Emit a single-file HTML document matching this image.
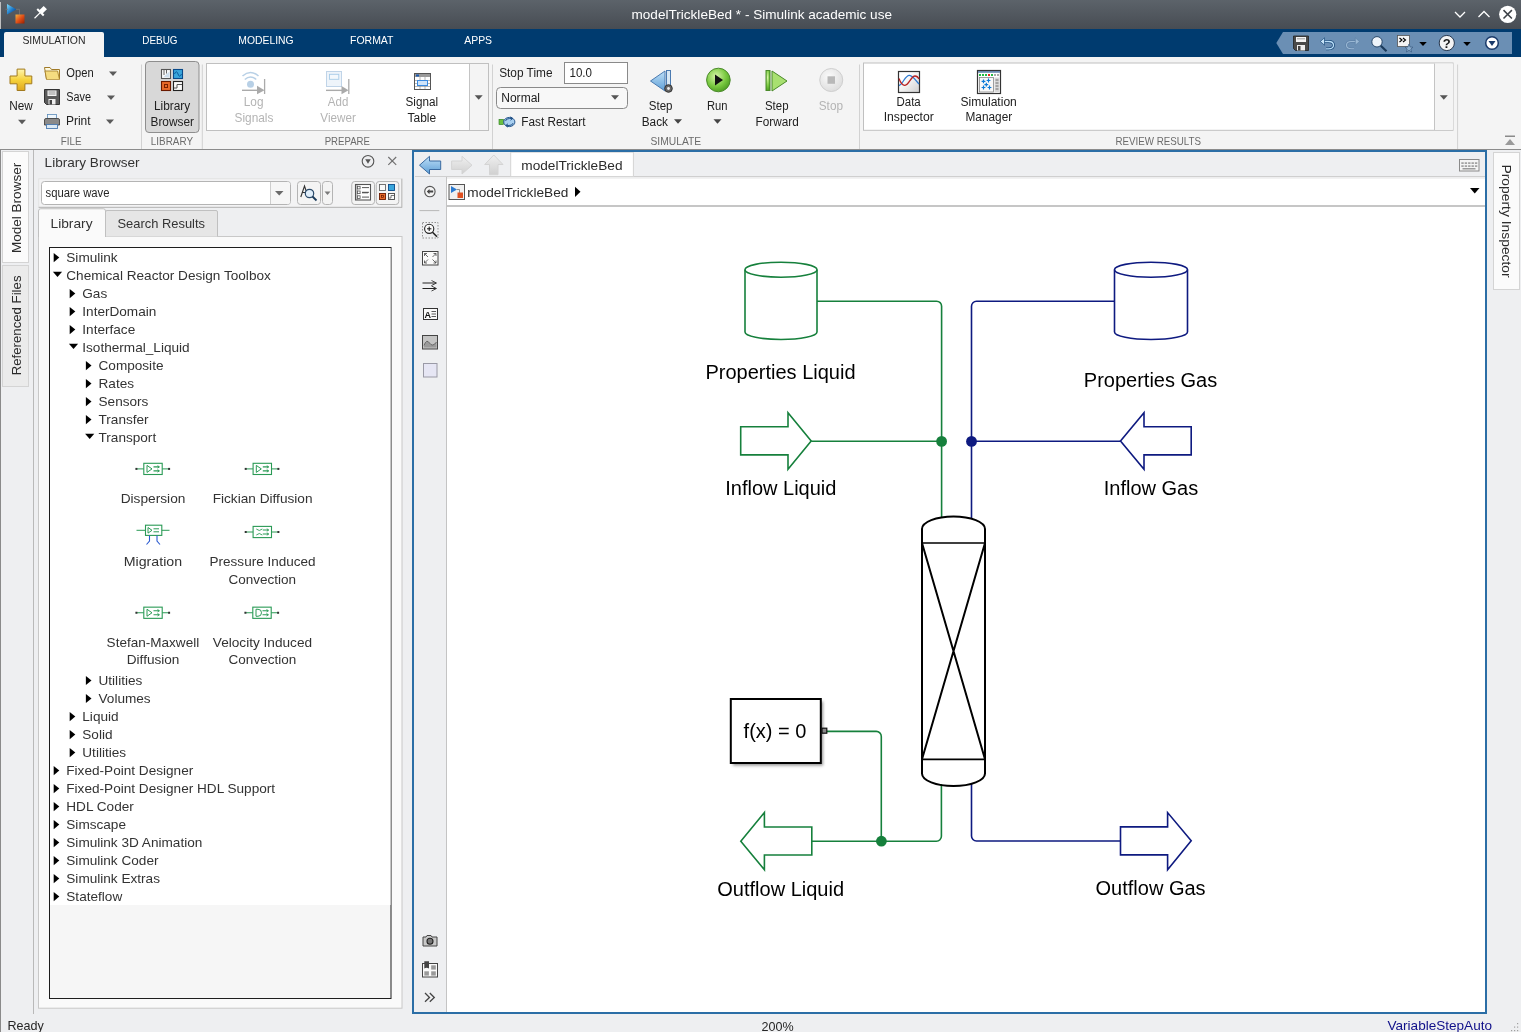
<!DOCTYPE html>
<html><head><meta charset="utf-8">
<style>
html,body{margin:0;padding:0;width:1521px;height:1032px;overflow:hidden;background:#eeeff1}
svg{display:block;font-family:"Liberation Sans",sans-serif;will-change:transform}
</style></head>
<body>
<svg width="1521" height="1032" viewBox="0 0 1521 1032">
<rect x="0" y="0" width="1521" height="1032" fill="#eeeff1" />
<defs><linearGradient id="tg" x1="0" y1="0" x2="0" y2="1"><stop offset="0" stop-color="#5c636a"/><stop offset="1" stop-color="#474c53"/></linearGradient><linearGradient id="gold" x1="0" y1="0" x2="0" y2="1"><stop offset="0" stop-color="#fff6b0"/><stop offset="0.5" stop-color="#f6d23c"/><stop offset="1" stop-color="#e0a820"/></linearGradient><linearGradient id="folder" x1="0" y1="0" x2="0" y2="1"><stop offset="0" stop-color="#fffef0"/><stop offset="1" stop-color="#f2d770"/></linearGradient><radialGradient id="run" cx="0.4" cy="0.35" r="0.7"><stop offset="0" stop-color="#d8f5a8"/><stop offset="0.6" stop-color="#79c940"/><stop offset="1" stop-color="#4a9a20"/></radialGradient><radialGradient id="stopg" cx="0.4" cy="0.35" r="0.7"><stop offset="0" stop-color="#fafafa"/><stop offset="1" stop-color="#dcdcdc"/></radialGradient><linearGradient id="blueArr" x1="0" y1="0" x2="0" y2="1"><stop offset="0" stop-color="#bfe0f8"/><stop offset="1" stop-color="#5e9fd6"/></linearGradient><linearGradient id="grayArr" x1="0" y1="0" x2="0" y2="1"><stop offset="0" stop-color="#f0f0f0"/><stop offset="1" stop-color="#d0d0d0"/></linearGradient><linearGradient id="slTri" x1="0" y1="0" x2="1" y2="1"><stop offset="0" stop-color="#80dcfa"/><stop offset="0.55" stop-color="#1a78c8"/><stop offset="1" stop-color="#0a2a70"/></linearGradient><linearGradient id="slSq" x1="0" y1="0" x2="1" y2="1"><stop offset="0" stop-color="#f0b040"/><stop offset="0.5" stop-color="#e05018"/><stop offset="1" stop-color="#982000"/></linearGradient><filter id="sh" x="-20%" y="-20%" width="140%" height="140%"><feGaussianBlur stdDeviation="1.5"/></filter></defs>
<rect x="0" y="0" width="1521" height="29" fill="url(#tg)" />
<line x1="0.5" y1="29" x2="0.5" y2="1032" stroke="#8a8a8a" stroke-width="1" />
<line x1="0.5" y1="2" x2="0.5" y2="29" stroke="#c0c0c0" stroke-width="1" />
<path d="M7,4 L16.5,9.5 L7,14.5 Z" fill="url(#slTri)" />
<path d="M5.5,9.3 H8 M16,9.3 H19.5 V15" fill="none" stroke="#777" stroke-width="0.8" />
<rect x="15.5" y="14.5" width="9" height="9" fill="url(#slSq)" />
<g transform="translate(40.2,12.6) rotate(45)" fill="#fff"><rect x="-2.3" y="-7.2" width="4.6" height="6.2"/><rect x="-4.6" y="-1.4" width="9.2" height="2"/><rect x="-0.6" y="0" width="1.2" height="8"/></g>
<text x="631.5" y="18.8" font-size="13.5" fill="#ffffff" textLength="260.5" lengthAdjust="spacingAndGlyphs" >modelTrickleBed * - Simulink academic use</text>
<path d="M1455,12 L1460,17 L1465,12" fill="none" stroke="#fff" stroke-width="1.3" />
<path d="M1478.5,17 L1484,11.5 L1489.5,17" fill="none" stroke="#fff" stroke-width="1.3" />
<circle cx="1507.7" cy="14.3" r="8.6" fill="#ffffff"/>
<path d="M1503.5,10.1 L1511.9,18.5 M1511.9,10.1 L1503.5,18.5" fill="none" stroke="#3d4248" stroke-width="1.5" />
<rect x="0" y="29" width="1521" height="28" fill="#003b6f" />
<path d="M4,57 V34 Q4,32 6,32 H102 Q104,32 104,34 V57 Z" fill="#f4f4f4" />
<text x="22.4" y="44.4" font-size="11.5" fill="#2a2a2a" textLength="63.1" lengthAdjust="spacingAndGlyphs" >SIMULATION</text>
<text x="142.3" y="44.4" font-size="11.5" fill="#ffffff" textLength="35.2" lengthAdjust="spacingAndGlyphs" >DEBUG</text>
<text x="238.3" y="44.4" font-size="11.5" fill="#ffffff" textLength="55.3" lengthAdjust="spacingAndGlyphs" >MODELING</text>
<text x="350" y="44.4" font-size="11.5" fill="#ffffff" textLength="43.5" lengthAdjust="spacingAndGlyphs" >FORMAT</text>
<text x="464.2" y="44.4" font-size="11.5" fill="#ffffff" textLength="27.9" lengthAdjust="spacingAndGlyphs" >APPS</text>
<path d="M1276.3,43 L1283,32 H1512 V54 H1283 Z" fill="#6b8fb4" />
<rect x="0" y="57" width="1521" height="92" fill="#f4f4f4" />
<rect x="0" y="149" width="1521" height="1" fill="#8c8c8c" />
<rect x="141.0" y="64.5" width="1" height="84.5" fill="#d2d2d2" />
<rect x="201.8" y="64.5" width="1" height="84.5" fill="#d2d2d2" />
<rect x="492.0" y="64.5" width="1" height="84.5" fill="#d2d2d2" />
<rect x="859.0" y="64.5" width="1" height="84.5" fill="#d2d2d2" />
<rect x="1457.1" y="64.5" width="1" height="84.5" fill="#d2d2d2" />
<text x="60.7" y="145" font-size="11" fill="#6b6b6b" textLength="20.8" lengthAdjust="spacingAndGlyphs" >FILE</text>
<text x="150.8" y="145" font-size="11" fill="#6b6b6b" textLength="42.2" lengthAdjust="spacingAndGlyphs" >LIBRARY</text>
<text x="324.7" y="144.7" font-size="11" fill="#6b6b6b" textLength="45.3" lengthAdjust="spacingAndGlyphs" >PREPARE</text>
<text x="650.5" y="144.5" font-size="11" fill="#6b6b6b" textLength="50.75" lengthAdjust="spacingAndGlyphs" >SIMULATE</text>
<text x="1115.4" y="144.5" font-size="11" fill="#6b6b6b" textLength="85.6" lengthAdjust="spacingAndGlyphs" >REVIEW RESULTS</text>
<path d="M17.1,69.1 H24.9 V76 H31.8 V83.8 H24.9 V90.5 H17.1 V83.8 H10 V76 H17.1 Z" fill="url(#gold)" stroke="#a27a1e" stroke-width="1" />
<text x="9.25" y="109.6" font-size="12" fill="#212121" textLength="23.6" lengthAdjust="spacingAndGlyphs" >New</text>
<path d="M18.0,119.75 L26.0,119.75 L22,124.25 Z" fill="#5a5a5a" />
<path d="M44.5,67.5 H50 L51.5,69.5 H59.5 V79.3 H46.5 Z" fill="url(#folder)" stroke="#a07a28" stroke-width="1" />
<path d="M46.5,79.3 L45,71 H57.5 L59.5,79.3" fill="#f5dc80" stroke="#a07a28" stroke-width="0.8" />
<text x="66.3" y="76.9" font-size="12" fill="#212121" textLength="27.3" lengthAdjust="spacingAndGlyphs" >Open</text>
<path d="M109.0,71.55 L117.0,71.55 L113,76.05 Z" fill="#5a5a5a" />
<path d="M44.5,89.5 H59.5 V104.5 H46.5 L44.5,102.5 Z" fill="#5a5a5a" stroke="#333" stroke-width="1" />
<rect x="47.5" y="90.5" width="9" height="5.5" fill="#f4f4f4" />
<line x1="48.5" y1="92" x2="55.5" y2="92" stroke="#777" stroke-width="0.8" />
<line x1="48.5" y1="94" x2="55.5" y2="94" stroke="#777" stroke-width="0.8" />
<rect x="48.5" y="99" width="7" height="5.5" fill="#f0f0f0" />
<rect x="49.5" y="100" width="2.5" height="4.5" fill="#444" />
<text x="66.3" y="100.8" font-size="12" fill="#212121" textLength="24.8" lengthAdjust="spacingAndGlyphs" >Save</text>
<path d="M107.0,95.55 L115.0,95.55 L111,100.05 Z" fill="#5a5a5a" />
<rect x="47.5" y="114.5" width="9" height="4" fill="#eef6fc" stroke="#5a8ab8" stroke-width="0.8" />
<path d="M44.5,120 Q44.5,118.5 46,118.5 H58 Q59.5,118.5 59.5,120 V125 H44.5 Z" fill="#8a8a8a" stroke="#444" stroke-width="0.9" />
<rect x="46.5" y="124.5" width="11" height="4" fill="#dceaf6" stroke="#4a7ab0" stroke-width="0.9" />
<text x="66" y="124.6" font-size="12" fill="#212121" textLength="24.6" lengthAdjust="spacingAndGlyphs" >Print</text>
<path d="M106.0,119.55 L114.0,119.55 L110,124.05 Z" fill="#5a5a5a" />
<rect x="145.5" y="61.5" width="53.5" height="71" fill="#d8d8d8" stroke="#8e8e8e" stroke-width="1" rx="3.5" />
<rect x="161.5" y="69.5" width="9" height="9" fill="#fafafa" stroke="#555" stroke-width="1.1" />
<path d="M163.5,77 L169.5,71.5 V77.5 Z" fill="#cfe0ef" />
<line x1="164" y1="70" x2="164" y2="75" stroke="#555" stroke-width="0.9" />
<line x1="166.5" y1="70" x2="166.5" y2="73.5" stroke="#555" stroke-width="0.9" />
<rect x="173.5" y="69.5" width="9" height="9" fill="#3aa6dc" stroke="#0a4a8a" stroke-width="1.1" />
<path d="M174.5,74 Q176.5,69.5 178,74 T181.5,74" fill="none" stroke="#0a5a9a" stroke-width="1" />
<rect x="161.5" y="81.5" width="9" height="9" fill="#e86a2a" stroke="#6a1a00" stroke-width="1.1" />
<rect x="164.5" y="84.5" width="3" height="3" fill="none" stroke="#7a2000" stroke-width="1" />
<rect x="173.5" y="81.5" width="9" height="9" fill="#fafafa" stroke="#222" stroke-width="1.1" />
<path d="M174,88 H177 V84.5 H182" fill="none" stroke="#555" stroke-width="1" />
<text x="153.9" y="109.6" font-size="12" fill="#212121" textLength="36.3" lengthAdjust="spacingAndGlyphs" >Library</text>
<text x="150.5" y="125.7" font-size="12" fill="#212121" textLength="43.5" lengthAdjust="spacingAndGlyphs" >Browser</text>
<rect x="206.5" y="63.5" width="282" height="67" fill="#ffffff" stroke="#c0c0c0" stroke-width="1" />
<rect x="469.5" y="64" width="18.5" height="66" fill="#f4f4f4" />
<line x1="469.5" y1="64" x2="469.5" y2="130" stroke="#c4c4c4" stroke-width="1" />
<path d="M474.7,95.15 L482.7,95.15 L478.7,99.65 Z" fill="#555" />
<path d="M242.5,76 Q250.5,69 258.5,76" fill="none" stroke="#b8d0e6" stroke-width="1.6" />
<path d="M244.8,79.5 Q250.5,74.5 256.2,79.5" fill="none" stroke="#b8d0e6" stroke-width="1.6" />
<circle cx="250.5" cy="84.2" r="3.5" fill="#b8d0e6"/>
<line x1="242" y1="90.3" x2="259" y2="90.3" stroke="#aaaaaa" stroke-width="1.4" />
<path d="M257,85.8 L264.5,90.3 L257,94.3 Z" fill="#aaaaaa" />
<line x1="264.6" y1="79" x2="264.6" y2="94" stroke="#aaaaaa" stroke-width="1.3" />
<text x="243.8" y="105.9" font-size="12" fill="#b4b4b4" textLength="19.7" lengthAdjust="spacingAndGlyphs" >Log</text>
<text x="234.5" y="121.7" font-size="12" fill="#b4b4b4" textLength="38.9" lengthAdjust="spacingAndGlyphs" >Signals</text>
<rect x="326.5" y="71.5" width="15" height="15" fill="#eef4fa" stroke="#c0d4e8" stroke-width="1" />
<rect x="329.5" y="74.3" width="9.3" height="5" fill="#f4f8fc" stroke="#a8cce8" stroke-width="0.9" />
<line x1="326" y1="90.35" x2="343" y2="90.35" stroke="#aaaaaa" stroke-width="1.4" />
<path d="M341.5,86 L348.5,90.35 L341.5,94.3 Z" fill="#aaaaaa" />
<line x1="348.8" y1="79" x2="348.8" y2="94" stroke="#aaaaaa" stroke-width="1.3" />
<text x="327.8" y="105.9" font-size="12" fill="#b4b4b4" textLength="20.5" lengthAdjust="spacingAndGlyphs" >Add</text>
<text x="320.3" y="121.7" font-size="12" fill="#b4b4b4" textLength="35.5" lengthAdjust="spacingAndGlyphs" >Viewer</text>
<rect x="414.5" y="73.5" width="16" height="16" fill="#ffffff" stroke="#555" stroke-width="1" />
<rect x="415" y="74" width="15" height="3" fill="#9a9a9a" />
<rect x="416" y="74.5" width="3" height="2" fill="#1a5ab0" />
<line x1="415" y1="80.5" x2="430" y2="80.5" stroke="#888" stroke-width="0.6" />
<line x1="415" y1="83.5" x2="430" y2="83.5" stroke="#888" stroke-width="0.6" />
<line x1="415" y1="86.5" x2="430" y2="86.5" stroke="#888" stroke-width="0.6" />
<line x1="420" y1="77" x2="420" y2="89" stroke="#888" stroke-width="0.6" />
<line x1="425" y1="77" x2="425" y2="89" stroke="#888" stroke-width="0.6" />
<rect x="417.5" y="80.5" width="10" height="5" fill="#cfe4fa" stroke="#3a8ae0" stroke-width="1" />
<text x="405.5" y="105.9" font-size="12" fill="#212121" textLength="32.5" lengthAdjust="spacingAndGlyphs" >Signal</text>
<text x="407.5" y="121.7" font-size="12" fill="#212121" textLength="28.6" lengthAdjust="spacingAndGlyphs" >Table</text>
<text x="499.2" y="77" font-size="12" fill="#212121" textLength="53.3" lengthAdjust="spacingAndGlyphs" >Stop Time</text>
<rect x="564.5" y="62.5" width="63" height="21" fill="#ffffff" stroke="#8a8a8a" stroke-width="1" />
<text x="569.5" y="77" font-size="12" fill="#212121" textLength="22.5" lengthAdjust="spacingAndGlyphs" >10.0</text>
<rect x="496.5" y="87.5" width="131" height="21" fill="#f8f8f8" stroke="#8a8a8a" stroke-width="1" rx="4" />
<text x="501.25" y="102" font-size="12" fill="#212121" textLength="38.75" lengthAdjust="spacingAndGlyphs" >Normal</text>
<path d="M611.0,95.25 L619.0,95.25 L615,99.75 Z" fill="#555" />
<rect x="499" y="119.3" width="4.5" height="5.3" fill="#6ac040" stroke="#2a7a20" stroke-width="0.6" />
<ellipse cx="509.3" cy="122" rx="5.6" ry="4.6" fill="#a8cff0" stroke="#2a5a90" stroke-width="1"/>
<path d="M505.5,121 Q506,118.5 509.5,118.5 H512 M510.5,116.8 L512.8,118.5 L510.5,120.2" fill="none" stroke="#1a4a80" stroke-width="0.9" />
<path d="M513.2,123 Q512.6,125.5 509,125.5 H506.5 M508,123.8 L505.7,125.5 L508,127.2" fill="none" stroke="#1a4a80" stroke-width="0.9" />
<text x="521.25" y="126.25" font-size="12" fill="#212121" textLength="64.25" lengthAdjust="spacingAndGlyphs" >Fast Restart</text>
<path d="M650.5,81 L665,71 V91 Z" fill="url(#blueArr)" stroke="#4a7ab0" stroke-width="1" />
<rect x="666.5" y="70.5" width="4" height="20" fill="#d8e8f4" stroke="#4a7ab0" stroke-width="1" />
<circle cx="668.5" cy="88.5" r="3.8" fill="#666" stroke="#333" stroke-width="1"/>
<circle cx="668.5" cy="88.5" r="1.4" fill="#eee"/>
<text x="648.75" y="110" font-size="12" fill="#212121" textLength="23.75" lengthAdjust="spacingAndGlyphs" >Step</text>
<text x="641.75" y="125.75" font-size="12" fill="#212121" textLength="26.25" lengthAdjust="spacingAndGlyphs" >Back</text>
<path d="M674.0,119.25 L682.0,119.25 L678,123.75 Z" fill="#444" />
<circle cx="718.4" cy="80" r="11.8" fill="url(#run)" stroke="#4a8a2a" stroke-width="1"/>
<path d="M715,74.5 L723,80 L715,85.5 Z" fill="#111" />
<text x="707" y="110" font-size="12" fill="#212121" textLength="20.5" lengthAdjust="spacingAndGlyphs" >Run</text>
<path d="M713.5,119.25 L721.5,119.25 L717.5,123.75 Z" fill="#444" />
<rect x="766" y="70.5" width="4" height="20" fill="url(#run)" stroke="#4a8a2a" stroke-width="1" />
<path d="M772,71 L787,81 L772,91 Z" fill="#a8e070" stroke="#4a8a2a" stroke-width="1" />
<text x="765" y="110" font-size="12" fill="#212121" textLength="23.5" lengthAdjust="spacingAndGlyphs" >Step</text>
<text x="755.5" y="125.75" font-size="12" fill="#212121" textLength="43.25" lengthAdjust="spacingAndGlyphs" >Forward</text>
<circle cx="831.25" cy="80" r="11.5" fill="url(#stopg)" stroke="#cfcfcf" stroke-width="1"/>
<rect x="827.5" y="76.3" width="7.5" height="7.5" fill="#b8b8b8" />
<text x="818.75" y="110" font-size="12" fill="#b4b4b4" textLength="24.25" lengthAdjust="spacingAndGlyphs" >Stop</text>
<rect x="863.5" y="63" width="589.5" height="67.3" fill="#ffffff" stroke="#c0c0c0" stroke-width="1" />
<rect x="1434.5" y="63.5" width="18.5" height="66.3" fill="#f4f4f4" />
<line x1="1434.5" y1="63.5" x2="1434.5" y2="130" stroke="#c4c4c4" stroke-width="1" />
<path d="M1439.8,95.35 L1447.8,95.35 L1443.8,99.85 Z" fill="#555" />
<linearGradient id="diBg" x1="0.3" y1="0.3" x2="1" y2="1"><stop offset="0" stop-color="#ffffff"/><stop offset="1" stop-color="#cfcfcf"/></linearGradient>
<rect x="898.5" y="71.5" width="21" height="21" fill="url(#diBg)" stroke="#333" stroke-width="1.2" />
<path d="M899,85.5 C903,84.5 905,75 909.5,75.3 C913,75.5 916,81 919,84" fill="none" stroke="#2f7ad0" stroke-width="1.3" />
<path d="M899,78.5 C901,84 903,85.5 905,85.3 C909,85 911,76 915,76 C917,76 918.5,78 919,79" fill="none" stroke="#b82020" stroke-width="1.3" />
<text x="896.5" y="105.6" font-size="12" fill="#212121" textLength="24.2" lengthAdjust="spacingAndGlyphs" >Data</text>
<text x="883.7" y="121.2" font-size="12" fill="#212121" textLength="50.1" lengthAdjust="spacingAndGlyphs" >Inspector</text>
<rect x="977.5" y="70.5" width="23" height="23" fill="#ffffff" stroke="#333" stroke-width="1.2" />
<rect x="978" y="71" width="22" height="1.8" fill="#6a8ab0" />
<rect x="979" y="74" width="2" height="2" fill="#22bb44" />
<rect x="982" y="74" width="2" height="2" fill="#22bb44" />
<rect x="985" y="74" width="2" height="2" fill="#22bb44" />
<rect x="988" y="74" width="2" height="2" fill="#ee2222" />
<rect x="991" y="74" width="2" height="2" fill="#22bb44" />
<rect x="994" y="74" width="2" height="2" fill="#aaa" />
<rect x="997" y="74" width="2" height="2" fill="#aaa" />
<rect x="979.5" y="77.5" width="14" height="14.5" fill="#f8f8f8" stroke="#777" stroke-width="0.7" />
<rect x="994.5" y="77.5" width="5" height="14.5" fill="#d8d8d8" />
<line x1="995.5" y1="80" x2="998.5" y2="80" stroke="#555" stroke-width="0.8" />
<line x1="995.5" y1="83" x2="998.5" y2="83" stroke="#555" stroke-width="0.8" />
<line x1="995.5" y1="86" x2="998.5" y2="86" stroke="#555" stroke-width="0.8" />
<line x1="995.5" y1="89" x2="998.5" y2="89" stroke="#555" stroke-width="0.8" />
<path d="M981.6,81.3 H985.4 M983.5,79.39999999999999 V83.2" fill="none" stroke="#0a7ad8" stroke-width="1.2" />
<path d="M986.6,80.5 H990.4 M988.5,78.6 V82.4" fill="none" stroke="#0a7ad8" stroke-width="1.2" />
<path d="M984.4,84.6 H988.1999999999999 M986.3,82.69999999999999 V86.5" fill="none" stroke="#0a7ad8" stroke-width="1.2" />
<path d="M981.6,87.5 H985.4 M983.5,85.6 V89.4" fill="none" stroke="#0a7ad8" stroke-width="1.2" />
<path d="M987.6,87.5 H991.4 M989.5,85.6 V89.4" fill="none" stroke="#0a7ad8" stroke-width="1.2" />
<text x="960.5" y="105.6" font-size="12" fill="#212121" textLength="56.3" lengthAdjust="spacingAndGlyphs" >Simulation</text>
<text x="965.5" y="121.2" font-size="12" fill="#212121" textLength="46.7" lengthAdjust="spacingAndGlyphs" >Manager</text>
<rect x="1505" y="135.5" width="10" height="1.5" fill="#8a8a8a" />
<path d="M1505,145 L1510,139 L1515,145 Z" fill="#9a9a9a" />
<path d="M1293.5,36 H1308.5 V50.5 H1295.5 L1293.5,48.5 Z" fill="#4a4a4a" stroke="#222" stroke-width="0.8" />
<rect x="1296" y="37" width="10" height="5" fill="#f4f4f4" />
<line x1="1297" y1="38.8" x2="1305" y2="38.8" stroke="#777" stroke-width="0.7" />
<rect x="1297" y="45" width="8" height="5.5" fill="#f0f0f0" />
<rect x="1298" y="46" width="2.5" height="4.5" fill="#444" />
<path d="M1323,41.5 H1328.5 Q1333.5,41.5 1333.5,45.3 Q1333.5,48.8 1328.5,48.8 H1326" fill="none" stroke="#1a4a7a" stroke-width="2.8" />
<path d="M1323,41.5 H1328.5 Q1333.5,41.5 1333.5,45.3 Q1333.5,48.8 1328.5,48.8 H1326" fill="none" stroke="#b8dcf6" stroke-width="1.3" />
<path d="M1320.3,41.5 L1324.5,37.8 V45.2 Z" fill="#c8e4f8" stroke="#1a4a7a" stroke-width="0.7" />
<path d="M1357,41.5 H1351.5 Q1346.5,41.5 1346.5,45.3 Q1346.5,48.8 1351.5,48.8 H1354" fill="none" stroke="#5f82a8" stroke-width="2.6" />
<path d="M1357,41.5 H1351.5 Q1346.5,41.5 1346.5,45.3 Q1346.5,48.8 1351.5,48.8 H1354" fill="none" stroke="#9ab8d4" stroke-width="1.1" />
<path d="M1359.5,41.5 L1355.3,37.8 V45.2 Z" fill="#9ab8d4" stroke="#5f82a8" stroke-width="0.7" />
<circle cx="1377" cy="41.8" r="5.2" fill="#eef4fa" stroke="#28486a" stroke-width="1"/>
<line x1="1380.8" y1="45.8" x2="1386.5" y2="51.2" stroke="#1a3a5a" stroke-width="2.2" />
<rect x="1397.5" y="35.5" width="12" height="11" fill="#f4f4f4" stroke="#555" stroke-width="0.8" />
<path d="M1399.5,38 L1402,40 L1399.5,42 M1403,38 L1405.5,40 L1403,42" fill="none" stroke="#000" stroke-width="1.1" />
<path d="M1409,44 L1410.2,47 L1413,47.2 L1410.8,49 L1411.6,52 L1409,50.3 L1406.4,52 L1407.2,49 L1405,47.2 L1407.8,47 Z" fill="#8fb0d0" stroke="#3a5a80" stroke-width="0.7" />
<path d="M1419.25,42.0 L1426.75,42.0 L1423,46.0 Z" fill="#000" />
<circle cx="1446.8" cy="43" r="7.6" fill="#f4f4f4" stroke="#2a3a50" stroke-width="1"/>
<text x="1442.8" y="47.8" font-size="13" fill="#1a1a1a" font-weight="bold">?</text>
<path d="M1463.25,42.0 L1470.75,42.0 L1467,46.0 Z" fill="#000" />
<circle cx="1492" cy="43" r="6.3" fill="#ffffff" stroke="#1a3a6a" stroke-width="1.5"/>
<path d="M1488.5,41 H1495.5 L1492,46 Z" fill="#1a3a6a" />
<rect x="33" y="150" width="1" height="864" fill="#b9b9b9" />
<rect x="2.5" y="151.5" width="26" height="111" fill="#fbfbfb" stroke="#d4d4d4" stroke-width="1" />
<text transform="translate(21.4,253) rotate(-90)" x="0" y="0" font-size="13.5" fill="#2b2b2b" textLength="90.2" lengthAdjust="spacingAndGlyphs">Model Browser</text>
<rect x="2.5" y="265.5" width="26" height="121" fill="#ebebeb" stroke="#d4d4d4" stroke-width="1" />
<text transform="translate(21.4,375.3) rotate(-90)" x="0" y="0" font-size="13.5" fill="#2b2b2b" textLength="99.8" lengthAdjust="spacingAndGlyphs">Referenced Files</text>
<text x="44.6" y="166.9" font-size="13.5" fill="#333333" textLength="95" lengthAdjust="spacingAndGlyphs" >Library Browser</text>
<circle cx="368" cy="161.3" r="5.8" fill="none" stroke="#555" stroke-width="1.1"/>
<path d="M365.2,159.3 H370.8 L368,163.8 Z" fill="#555" />
<path d="M388.3,157 L396.2,164.8 M396.2,157 L388.3,164.8" fill="none" stroke="#707070" stroke-width="1.15" />
<rect x="38.75" y="178.75" width="363.25" height="28.75" fill="#f3f3f4" stroke="#e2e2e2" stroke-width="1" />
<line x1="38.75" y1="207.3" x2="402" y2="207.3" stroke="#b4b4b4" stroke-width="1" />
<line x1="401.8" y1="178.75" x2="401.8" y2="207.5" stroke="#b8b8b8" stroke-width="1" />
<rect x="41.5" y="181.5" width="249" height="23" fill="#ffffff" stroke="#b4b4b4" stroke-width="1" rx="3" />
<path d="M270.5,182 V204 H287.5 Q290,204 290,201.5 V184.5 Q290,182 287.5,182 Z" fill="#f6f6f6" />
<line x1="270.5" y1="182" x2="270.5" y2="204" stroke="#cdcdcd" stroke-width="1" />
<path d="M275.0,191.05 L283.5,191.05 L279.25,195.55 Z" fill="#6a6a6a" />
<text x="45.5" y="197" font-size="12" fill="#262626" textLength="64" lengthAdjust="spacingAndGlyphs" >square wave</text>
<rect x="297.5" y="181.5" width="23" height="23" fill="#f4f4f4" stroke="#b4b4b4" stroke-width="1" rx="3" />
<rect x="322.5" y="181.5" width="10" height="23" fill="#f4f4f4" stroke="#b4b4b4" stroke-width="1" rx="3" />
<path d="M324.5,191.55 L330.5,191.55 L327.5,195.05 Z" fill="#7a7a7a" />
<path d="M300.8,197 L304.5,186 L308.2,197 M302.3,192.5 H306.7" fill="none" stroke="#333" stroke-width="1.1" />
<circle cx="309.5" cy="193.5" r="4.2" fill="#e0eefa" stroke="#2a4a6a" stroke-width="1.2"/>
<line x1="312.5" y1="196.5" x2="316.5" y2="200.5" stroke="#1a3a5a" stroke-width="1.8" />
<rect x="351.75" y="181.5" width="22.75" height="23" fill="#f4f4f4" stroke="#b4b4b4" stroke-width="1" rx="3" />
<rect x="355.5" y="184.5" width="15" height="15.5" fill="#ffffff" stroke="#555" stroke-width="1.1" />
<line x1="357" y1="185" x2="357" y2="200" stroke="#666" stroke-width="0.8" />
<rect x="357.5" y="186.3" width="2.6" height="2.6" fill="#fff" stroke="#555" stroke-width="0.8" />
<line x1="362" y1="187.60000000000002" x2="369" y2="187.60000000000002" stroke="#444" stroke-width="0.9" />
<rect x="357.5" y="191" width="2.6" height="2.6" fill="#fff" stroke="#555" stroke-width="0.8" />
<line x1="362" y1="192.3" x2="369" y2="192.3" stroke="#444" stroke-width="0.9" />
<rect x="357.5" y="195.8" width="2.6" height="2.6" fill="#fff" stroke="#555" stroke-width="0.8" />
<line x1="362" y1="197.10000000000002" x2="369" y2="197.10000000000002" stroke="#444" stroke-width="0.9" />
<line x1="362" y1="192.8" x2="368" y2="192.8" stroke="#444" stroke-width="0.9" />
<rect x="376.25" y="181.5" width="22.5" height="23" fill="#f4f4f4" stroke="#b4b4b4" stroke-width="1" rx="3" />
<rect x="379.5" y="184.5" width="6" height="6" fill="#fafafa" stroke="#666" stroke-width="0.9" />
<rect x="388.5" y="184.5" width="6" height="6" fill="#3aa6dc" stroke="#0a4a8a" stroke-width="0.9" />
<rect x="379.5" y="193.5" width="6" height="6" fill="#e86a2a" stroke="#6a1a00" stroke-width="0.9" />
<rect x="381.5" y="195.5" width="2" height="2" fill="none" stroke="#6a1a00" stroke-width="0.7" />
<rect x="388.5" y="193.5" width="6" height="6" fill="#fafafa" stroke="#444" stroke-width="0.9" />
<path d="M389,198 H391 V195.5 H394" fill="none" stroke="#555" stroke-width="0.8" />
<rect x="38.5" y="236.5" width="363.5" height="771.7" fill="#fafafa" stroke="#c8c8c8" stroke-width="1" />
<path d="M105.5,236.5 V212 Q105.5,210.5 107,210.5 H216 Q217.5,210.5 217.5,212 V236.5" fill="#e6e6e6" stroke="#c0c0c0" stroke-width="1" />
<path d="M38.5,237 V211 Q38.5,208.75 40.75,208.75 H103.25 Q105.5,208.75 105.5,211 V237" fill="#fafafa" stroke="#c0c0c0" stroke-width="1" />
<rect x="39" y="235.5" width="66" height="2" fill="#fafafa" />
<text x="50.5" y="228" font-size="13.5" fill="#333333" textLength="42" lengthAdjust="spacingAndGlyphs" >Library</text>
<text x="117.5" y="228" font-size="13.5" fill="#333333" textLength="87.5" lengthAdjust="spacingAndGlyphs" >Search Results</text>
<rect x="49.5" y="247.5" width="341.5" height="751" fill="#f6f6f6" stroke="#1e1e1e" stroke-width="1" />
<rect x="50" y="248" width="340.5" height="657" fill="#ffffff" />
<path d="M53.7,253.0 L59.300000000000004,257.6 L53.7,262.2 Z" fill="#000" />
<text x="66.3" y="261.8" font-size="13.6" fill="#333333" >Simulink</text>
<path d="M52.9,271.8 H62.1 L57.5,277.1 Z" fill="#000" />
<text x="66.3" y="279.8" font-size="13.6" fill="#333333" >Chemical Reactor Design Toolbox</text>
<path d="M69.7,289.0 L75.3,293.6 L69.7,298.2 Z" fill="#000" />
<text x="82.3" y="297.8" font-size="13.6" fill="#333333" >Gas</text>
<path d="M69.7,307.0 L75.3,311.6 L69.7,316.2 Z" fill="#000" />
<text x="82.3" y="315.8" font-size="13.6" fill="#333333" >InterDomain</text>
<path d="M69.7,325.0 L75.3,329.6 L69.7,334.2 Z" fill="#000" />
<text x="82.3" y="333.8" font-size="13.6" fill="#333333" >Interface</text>
<path d="M68.9,343.8 H78.1 L73.5,349.1 Z" fill="#000" />
<text x="82.3" y="351.8" font-size="13.6" fill="#333333" >Isothermal_Liquid</text>
<path d="M85.9,361.0 L91.5,365.6 L85.9,370.2 Z" fill="#000" />
<text x="98.5" y="369.8" font-size="13.6" fill="#333333" >Composite</text>
<path d="M85.9,379.0 L91.5,383.6 L85.9,388.2 Z" fill="#000" />
<text x="98.5" y="387.8" font-size="13.6" fill="#333333" >Rates</text>
<path d="M85.9,397.0 L91.5,401.6 L85.9,406.2 Z" fill="#000" />
<text x="98.5" y="405.8" font-size="13.6" fill="#333333" >Sensors</text>
<path d="M85.9,415.0 L91.5,419.6 L85.9,424.2 Z" fill="#000" />
<text x="98.5" y="423.8" font-size="13.6" fill="#333333" >Transfer</text>
<path d="M85.10000000000001,433.8 H94.3 L89.7,439.1 Z" fill="#000" />
<text x="98.5" y="441.8" font-size="13.6" fill="#333333" >Transport</text>
<path d="M85.9,675.9000000000001 L91.5,680.5000000000001 L85.9,685.1000000000001 Z" fill="#000" />
<text x="98.5" y="684.7" font-size="13.6" fill="#333333" >Utilities</text>
<path d="M85.9,693.9000000000001 L91.5,698.5000000000001 L85.9,703.1000000000001 Z" fill="#000" />
<text x="98.5" y="702.7" font-size="13.6" fill="#333333" >Volumes</text>
<path d="M69.7,712.0 L75.3,716.6 L69.7,721.2 Z" fill="#000" />
<text x="82.3" y="720.8" font-size="13.6" fill="#333333" >Liquid</text>
<path d="M69.7,730.0 L75.3,734.6 L69.7,739.2 Z" fill="#000" />
<text x="82.3" y="738.8" font-size="13.6" fill="#333333" >Solid</text>
<path d="M69.7,748.0 L75.3,752.6 L69.7,757.2 Z" fill="#000" />
<text x="82.3" y="756.8" font-size="13.6" fill="#333333" >Utilities</text>
<path d="M53.7,766.0 L59.300000000000004,770.6 L53.7,775.2 Z" fill="#000" />
<text x="66.3" y="774.8" font-size="13.6" fill="#333333" >Fixed-Point Designer</text>
<path d="M53.7,784.0 L59.300000000000004,788.6 L53.7,793.2 Z" fill="#000" />
<text x="66.3" y="792.8" font-size="13.6" fill="#333333" >Fixed-Point Designer HDL Support</text>
<path d="M53.7,802.0 L59.300000000000004,806.6 L53.7,811.2 Z" fill="#000" />
<text x="66.3" y="810.8" font-size="13.6" fill="#333333" >HDL Coder</text>
<path d="M53.7,820.0 L59.300000000000004,824.6 L53.7,829.2 Z" fill="#000" />
<text x="66.3" y="828.8" font-size="13.6" fill="#333333" >Simscape</text>
<path d="M53.7,838.0 L59.300000000000004,842.6 L53.7,847.2 Z" fill="#000" />
<text x="66.3" y="846.8" font-size="13.6" fill="#333333" >Simulink 3D Animation</text>
<path d="M53.7,856.0 L59.300000000000004,860.6 L53.7,865.2 Z" fill="#000" />
<text x="66.3" y="864.8" font-size="13.6" fill="#333333" >Simulink Coder</text>
<path d="M53.7,874.0 L59.300000000000004,878.6 L53.7,883.2 Z" fill="#000" />
<text x="66.3" y="882.8" font-size="13.6" fill="#333333" >Simulink Extras</text>
<path d="M53.7,892.0 L59.300000000000004,896.6 L53.7,901.2 Z" fill="#000" />
<text x="66.3" y="900.8" font-size="13.6" fill="#333333" >Stateflow</text>
<line x1="136.4" y1="468.9" x2="169.6" y2="468.9" stroke="#2a9a55" stroke-width="1" />
<rect x="135.4" y="467.9" width="2" height="2" fill="#333" />
<rect x="168.1" y="467.9" width="2" height="2" fill="#333" />
<rect x="143.8" y="463.29999999999995" width="18.4" height="11.2" fill="#ffffff" stroke="#2a9a55" stroke-width="1.1" />
<path d="M147,465.4 L152,468.9 L147,472.4 Z" fill="none" stroke="#2a9a55" stroke-width="1" />
<path d="M153.5,466.9 H159 M153.5,470.9 H159" fill="none" stroke="#2a9a55" stroke-width="1.1" />
<path d="M157.5,465.7 L159.5,466.9 L157.5,468.09999999999997 M157.5,469.7 L159.5,470.9 L157.5,472.09999999999997" fill="none" stroke="#2a9a55" stroke-width="0.9" />
<line x1="245.70000000000002" y1="468.9" x2="278.90000000000003" y2="468.9" stroke="#2a9a55" stroke-width="1" />
<rect x="244.70000000000002" y="467.9" width="2" height="2" fill="#333" />
<rect x="277.40000000000003" y="467.9" width="2" height="2" fill="#333" />
<rect x="253.10000000000002" y="463.29999999999995" width="18.4" height="11.2" fill="#ffffff" stroke="#2a9a55" stroke-width="1.1" />
<path d="M256.3,465.4 L261.3,468.9 L256.3,472.4 Z" fill="none" stroke="#2a9a55" stroke-width="1" />
<path d="M262.8,466.9 H268.3 M262.8,470.9 H268.3" fill="none" stroke="#2a9a55" stroke-width="1.1" />
<path d="M266.8,465.7 L268.8,466.9 L266.8,468.09999999999997 M266.8,469.7 L268.8,470.9 L266.8,472.09999999999997" fill="none" stroke="#2a9a55" stroke-width="0.9" />
<line x1="136.5" y1="530.3" x2="169.5" y2="530.3" stroke="#2a9a55" stroke-width="1" />
<rect x="145.5" y="525.2" width="16.3" height="10.2" fill="#ffffff" stroke="#2a9a55" stroke-width="1.1" />
<path d="M148,527.5 L152,530.3 L148,533.1 Z" fill="none" stroke="#2a9a55" stroke-width="1" />
<path d="M153.5,528.8 H159 M153.5,531.8 H159" fill="none" stroke="#2a9a55" stroke-width="1" />
<path d="M149.5,535.5 V541 L146.5,544.5 M157,535.5 V541 L160,544.5" fill="none" stroke="#2a5ad0" stroke-width="1.1" />
<line x1="245.70000000000002" y1="532" x2="278.90000000000003" y2="532" stroke="#2a9a55" stroke-width="1" />
<rect x="244.70000000000002" y="531" width="2" height="2" fill="#333" />
<rect x="277.40000000000003" y="531" width="2" height="2" fill="#333" />
<rect x="253.10000000000002" y="526.4" width="18.4" height="11.2" fill="#ffffff" stroke="#2a9a55" stroke-width="1.1" />
<path d="M256.3,529 Q259.3,532 262.3,529 M256.3,535 Q259.3,532 262.3,535" fill="none" stroke="#2a9a55" stroke-width="0.9" />
<path d="M262.8,530 H268.3 M262.8,534 H268.3" fill="none" stroke="#2a9a55" stroke-width="1.1" />
<path d="M266.8,528.8 L268.8,530 L266.8,531.2 M266.8,532.8 L268.8,534 L266.8,535.2" fill="none" stroke="#2a9a55" stroke-width="0.9" />
<line x1="136.4" y1="612.75" x2="169.6" y2="612.75" stroke="#2a9a55" stroke-width="1" />
<rect x="135.4" y="611.75" width="2" height="2" fill="#333" />
<rect x="168.1" y="611.75" width="2" height="2" fill="#333" />
<rect x="143.8" y="607.15" width="18.4" height="11.2" fill="#ffffff" stroke="#2a9a55" stroke-width="1.1" />
<path d="M147,609.25 L152,612.75 L147,616.25 Z" fill="none" stroke="#2a9a55" stroke-width="1" />
<path d="M153.5,610.75 H159 M153.5,614.75 H159" fill="none" stroke="#2a9a55" stroke-width="1.1" />
<path d="M157.5,609.55 L159.5,610.75 L157.5,611.95 M157.5,613.55 L159.5,614.75 L157.5,615.95" fill="none" stroke="#2a9a55" stroke-width="0.9" />
<line x1="245.4" y1="612.75" x2="278.6" y2="612.75" stroke="#2a9a55" stroke-width="1" />
<rect x="244.4" y="611.75" width="2" height="2" fill="#333" />
<rect x="277.1" y="611.75" width="2" height="2" fill="#333" />
<rect x="252.8" y="607.15" width="18.4" height="11.2" fill="#ffffff" stroke="#2a9a55" stroke-width="1.1" />
<path d="M256,609.25 H258 Q261.5,609.25 261.5,612.75 Q261.5,616.25 258,616.25 H256 Z" fill="none" stroke="#2a9a55" stroke-width="1" />
<path d="M262.5,610.75 H268 M262.5,614.75 H268" fill="none" stroke="#2a9a55" stroke-width="1.1" />
<path d="M266.5,609.55 L268.5,610.75 L266.5,611.95 M266.5,613.55 L268.5,614.75 L266.5,615.95" fill="none" stroke="#2a9a55" stroke-width="0.9" />
<text x="153.05" y="502.9" font-size="13.6" fill="#333333" text-anchor="middle" textLength="64.7" lengthAdjust="spacingAndGlyphs" >Dispersion</text>
<text x="262.6" y="502.9" font-size="13.6" fill="#333333" text-anchor="middle" textLength="99.8" lengthAdjust="spacingAndGlyphs" >Fickian Diffusion</text>
<text x="152.9" y="566.1" font-size="13.6" fill="#333333" text-anchor="middle" textLength="58.4" lengthAdjust="spacingAndGlyphs" >Migration</text>
<text x="262.55" y="566.1" font-size="13.6" fill="#333333" text-anchor="middle" textLength="105.9" lengthAdjust="spacingAndGlyphs" >Pressure Induced</text>
<text x="262.3" y="583.8" font-size="13.6" fill="#333333" text-anchor="middle" textLength="67.6" lengthAdjust="spacingAndGlyphs" >Convection</text>
<text x="152.9" y="646.8" font-size="13.6" fill="#333333" text-anchor="middle" textLength="92.6" lengthAdjust="spacingAndGlyphs" >Stefan-Maxwell</text>
<text x="153.1" y="664.4" font-size="13.6" fill="#333333" text-anchor="middle" >Diffusion</text>
<text x="262.45" y="646.8" font-size="13.6" fill="#333333" text-anchor="middle" textLength="99.3" lengthAdjust="spacingAndGlyphs" >Velocity Induced</text>
<text x="262.4" y="664.4" font-size="13.6" fill="#333333" text-anchor="middle" textLength="67.6" lengthAdjust="spacingAndGlyphs" >Convection</text>
<rect x="412.5" y="150.5" width="1075" height="863.5" fill="#eeeff1" />
<line x1="415" y1="176.5" x2="1485" y2="176.5" stroke="#cfcfcf" stroke-width="1" />
<path d="M419.5,165.2 L429.5,156.3 V161 H440.7 V169.5 H429.5 V174 Z" fill="url(#blueArr)" stroke="#3a6aa0" stroke-width="1" />
<path d="M472,165.2 L462,156.3 V161 H451.6 V169.5 H462 V174 Z" fill="url(#grayArr)" stroke="#d4d4d4" stroke-width="1" />
<path d="M493.8,155 L503,164.5 H498 V174.7 H489.5 V164.5 H484.7 Z" fill="url(#grayArr)" stroke="#d4d4d4" stroke-width="1" />
<rect x="510.7" y="152.2" width="122.7" height="24.4" fill="#ffffff" stroke="#d4d4d4" stroke-width="1" />
<text x="521.3" y="169.9" font-size="13.5" fill="#2b2b2b" textLength="101.2" lengthAdjust="spacingAndGlyphs" >modelTrickleBed</text>
<rect x="1459.5" y="159.5" width="19.5" height="11.5" fill="#f4f4f4" stroke="#8a8a8a" stroke-width="1" />
<rect x="1461.3" y="162.3" width="2.4" height="1.6" fill="#9a9a9a" />
<rect x="1464.7" y="162.3" width="2.4" height="1.6" fill="#9a9a9a" />
<rect x="1468.1" y="162.3" width="2.4" height="1.6" fill="#9a9a9a" />
<rect x="1471.5" y="162.3" width="2.4" height="1.6" fill="#9a9a9a" />
<rect x="1474.8999999999999" y="162.3" width="2.4" height="1.6" fill="#9a9a9a" />
<rect x="1461.3" y="165.3" width="2.4" height="1.6" fill="#9a9a9a" />
<rect x="1464.7" y="165.3" width="2.4" height="1.6" fill="#9a9a9a" />
<rect x="1468.1" y="165.3" width="2.4" height="1.6" fill="#9a9a9a" />
<rect x="1471.5" y="165.3" width="2.4" height="1.6" fill="#9a9a9a" />
<rect x="1474.8999999999999" y="165.3" width="2.4" height="1.6" fill="#9a9a9a" />
<rect x="1462.5" y="168" width="13" height="1.5" fill="#9a9a9a" />
<rect x="447" y="177.5" width="1038" height="28" fill="#ffffff" />
<rect x="447" y="177.5" width="1038" height="1" fill="#e6e6e6" />
<rect x="447" y="205" width="1038" height="2" fill="#c6c6c6" />
<rect x="449" y="184.5" width="15.5" height="15" fill="#f0f0f0" stroke="#555" stroke-width="1" />
<path d="M451,186 L457,189.5 L451,193 Z" fill="#2a7ad0" />
<path d="M457,189.5 H459.5 V193" fill="none" stroke="#666" stroke-width="0.7" />
<rect x="457.5" y="192.5" width="5.5" height="5.5" fill="#e05020" />
<text x="467.3" y="197" font-size="13.5" fill="#2b2b2b" textLength="101" lengthAdjust="spacingAndGlyphs" >modelTrickleBed</text>
<path d="M575,186.7 L580.5,191.85 L575,197.0 Z" fill="#000" />
<path d="M1470,188 H1479.5 L1474.75,193.5 Z" fill="#000" />
<rect x="446" y="177" width="1" height="835" fill="#c4c4c4" />
<circle cx="429.9" cy="191.6" r="5.2" fill="#f4f4f4" stroke="#555" stroke-width="1.1"/>
<path d="M426.8,191.6 L429.5,189 V190.6 H433.2 V192.6 H429.5 V194.2 Z" fill="#444" />
<line x1="419.5" y1="210.6" x2="439.3" y2="210.6" stroke="#b8b8b8" stroke-width="1" />
<rect x="422.5" y="222.5" width="15.5" height="15.5" fill="none" stroke="#777" stroke-width="0.8" stroke-dasharray="1.5,1.5"/>
<circle cx="429.2" cy="228.8" r="4.6" fill="#fafafa" stroke="#222" stroke-width="1.1"/>
<path d="M427,228.8 H431.4 M429.2,226.6 V231" fill="none" stroke="#111" stroke-width="1" />
<line x1="432.5" y1="232.2" x2="437" y2="236.7" stroke="#222" stroke-width="1.6" />
<rect x="422.5" y="251.5" width="15.5" height="13.5" fill="#fafafa" stroke="#444" stroke-width="1" />
<path d="M424.5,253.5 L428,257 M424.5,253.5 H427 M424.5,253.5 V256 M436,253.5 L432.5,257 M436,253.5 H433.5 M436,253.5 V256 M424.5,263 L428,259.5 M424.5,263 H427 M424.5,263 V260.5 M436,263 L432.5,259.5 M436,263 H433.5 M436,263 V260.5" fill="none" stroke="#444" stroke-width="0.8" />
<path d="M422.5,283 H436 M422.5,288.5 H436" fill="none" stroke="#222" stroke-width="1.1" />
<path d="M431.5,280.5 L436.5,283 L431.5,285.5 M431.5,286 L436.5,288.5 L431.5,291" fill="none" stroke="#333" stroke-width="0.9" />
<rect x="423.5" y="308.5" width="14" height="11" fill="#fafafa" stroke="#333" stroke-width="1" />
<text x="424.6" y="317.6" font-size="9" fill="#111" font-weight="bold">A</text>
<path d="M431.5,311.5 H436 M431.5,314 H436 M431.5,316.5 H436" fill="none" stroke="#333" stroke-width="0.8" />
<rect x="422.5" y="335.5" width="15" height="13.5" fill="#c4c4c4" stroke="#444" stroke-width="1" />
<path d="M424,346 Q426.5,338.5 429.5,343 T436.5,342 V347.5 H424 Z" fill="#9a9a9a" />
<path d="M424,345.5 Q426.5,338.5 429.5,343 T436.5,342" fill="none" stroke="#555" stroke-width="0.8" />
<rect x="423.5" y="363.5" width="13.5" height="13.5" fill="#e6e6f4" stroke="#9a9aa6" stroke-width="1" />
<path d="M423,937 H426 L427,935.5 H431 L432,937 H437 V946 H423 Z" fill="#c8c8c8" stroke="#444" stroke-width="1" />
<circle cx="430" cy="941.3" r="3" fill="#777" stroke="#222" stroke-width="1.1"/>
<rect x="422.5" y="963.5" width="15" height="13.5" fill="#fafafa" stroke="#444" stroke-width="1" />
<rect x="431.2" y="965.3" width="4.6" height="4.3" fill="#9a9a9a" />
<rect x="424.3" y="971.3" width="4.6" height="4.3" fill="#9a9a9a" />
<rect x="431.2" y="971.3" width="4.6" height="4.3" fill="#9a9a9a" />
<path d="M424.3,961.3 H429 V968.5 Q426.6,967 424.3,968.5 Z" fill="#454545" />
<path d="M425,993 L429.5,997.5 L425,1001.8 M429.8,993 L434.3,997.5 L429.8,1001.8" fill="none" stroke="#444" stroke-width="1.3" />
<rect x="1463" y="1000" width="3.5" height="5" fill="#f2f2f2" />
<rect x="1468" y="1000" width="3.5" height="5" fill="#f2f2f2" />
<rect x="1473" y="1000" width="10" height="5" fill="#f2f2f2" />
<rect x="447" y="207" width="1038" height="805" fill="#ffffff" />
<g fill="none" stroke-width="1.6" stroke="#16803c">
<path d="M817,301.2 H936.6 A5,5 0 0 1 941.6,306.2 V518"/>
<path d="M811.2,441.2 H941.6"/>
<path d="M941.4,784 V836.2 A5,5 0 0 1 936.4,841.2 H811.8"/>
<path d="M827,731.4 H876.3 A5,5 0 0 1 881.3,736.4 V841.2"/>
<path d="M745,269.7 V332 A36,7.5 0 0 0 817,332 V269.7"/>
<ellipse cx="781" cy="269.7" rx="36" ry="7.5"/>
<polygon points="740.7,426.7 788,426.7 788,412.8 811.2,441 788,469.3 788,454.9 740.7,454.9"/>
<polygon points="811.8,827 764.4,827 764.4,812.5 740.8,841.2 764.4,869.7 764.4,855 811.8,855"/>
</g>
<g fill="#16803c"><circle cx="941.6" cy="441.4" r="5.4"/><circle cx="881.4" cy="841.2" r="5.4"/></g>
<g fill="none" stroke-width="1.6" stroke="#0e1a80">
<path d="M1114.5,301.3 H976.5 A5,5 0 0 0 971.5,306.3 V518"/>
<path d="M1120.5,441.2 H971.5"/>
<path d="M971.5,784 V836 A5,5 0 0 0 976.5,841 H1120.5"/>
<path d="M1114.5,269.7 V332 A36.5,7.5 0 0 0 1187.5,332 V269.7"/>
<ellipse cx="1151" cy="269.7" rx="36.5" ry="7.5"/>
<polygon points="1191.2,426.7 1144,426.7 1144,412.8 1120.5,441 1144,469.3 1144,454.9 1191.2,454.9"/>
<polygon points="1120.5,826.9 1167.6,826.9 1167.6,812.6 1191.2,840.8 1167.6,869.8 1167.6,854.9 1120.5,854.9"/>
</g>
<g fill="#0e1a80"><circle cx="971.5" cy="441.4" r="5.4"/></g>
<g fill="none" stroke="#000" stroke-width="2">
<path d="M922,529 A31.5,12.5 0 0 1 985,529 V773.6 A31.5,12.5 0 0 1 922,773.6 Z"/>
<path d="M922,543 L985,759.3 M985,543 L922,759.3"/>
<path d="M922,543 H985 M922,759.3 H985" stroke-width="1.7"/>
</g>
<rect x="733" y="701.5" width="90" height="64" fill="#777" filter="url(#sh)" opacity="0.8"/>
<rect x="730.8" y="699" width="90" height="64" fill="#fff" stroke="#000" stroke-width="2"/>
<rect x="822" y="728.2" width="4.8" height="5" fill="#888" stroke="#111" stroke-width="1.2"/>
<g font-size="20" fill="#000" text-anchor="middle">
<text x="780.5" y="379.2">Properties Liquid</text>
<text x="1150.5" y="387.3">Properties Gas</text>
<text x="780.8" y="495.3">Inflow Liquid</text>
<text x="1151" y="495.3">Inflow Gas</text>
<text x="780.7" y="895.7">Outflow Liquid</text>
<text x="1150.6" y="895.3">Outflow Gas</text>
<text x="775" y="738.2">f(x) = 0</text>
</g>
<rect x="413" y="151" width="1073" height="862" fill="none" stroke="#2b6ea6" stroke-width="2" />
<rect x="1493.5" y="152.5" width="26" height="137" fill="#fbfbfb" stroke="#d4d4d4" stroke-width="1" />
<text transform="translate(1501.7,164.5) rotate(90)" x="0" y="0" font-size="13.5" fill="#2b2b2b" textLength="113.2" lengthAdjust="spacingAndGlyphs">Property Inspector</text>
<text x="7.5" y="1030" font-size="13" fill="#262626" textLength="36.3" lengthAdjust="spacingAndGlyphs" >Ready</text>
<text x="761.6" y="1030.8" font-size="12.5" fill="#262626" textLength="32.1" lengthAdjust="spacingAndGlyphs" >200%</text>
<text x="1387.5" y="1030" font-size="13" fill="#10108a" textLength="104.5" lengthAdjust="spacingAndGlyphs" >VariableStepAuto</text>
<rect x="1517" y="1023" width="1.2" height="1.2" fill="#a0a0a0" />
<rect x="1514" y="1026.5" width="1.2" height="1.2" fill="#a0a0a0" />
<rect x="1517" y="1026.5" width="1.2" height="1.2" fill="#a0a0a0" />
<rect x="1511" y="1030" width="1.2" height="1.2" fill="#a0a0a0" />
<rect x="1514" y="1030" width="1.2" height="1.2" fill="#a0a0a0" />
<rect x="1517" y="1030" width="1.2" height="1.2" fill="#a0a0a0" />
</svg>
</body></html>
